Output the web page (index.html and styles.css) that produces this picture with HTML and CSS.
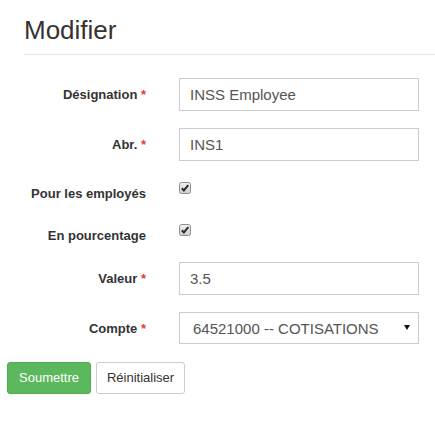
FILE: index.html
```html
<!DOCTYPE html>
<html lang="fr">
<head>
<meta charset="utf-8">
<title>Modifier</title>
<link rel="stylesheet" href="styles.css">
</head>
<body>
<div class="page">
  <div class="header">
    <h1 class="title">Modifier</h1>
  </div>
  <form class="form">
    <div class="row">
      <label class="lbl">Désignation <span class="req">*</span></label>
      <div class="ctl"><input class="inp" type="text" value="INSS Employee"></div>
    </div>
    <div class="row">
      <label class="lbl">Abr. <span class="req">*</span></label>
      <div class="ctl"><input class="inp" type="text" value="INS1"></div>
    </div>
    <div class="row row-check">
      <label class="lbl lbl-check">Pour les employés</label>
      <div class="ctl">
        <span class="check"><svg width="12" height="12" viewBox="0 0 12 12"><defs><linearGradient id="g1" x1="0" y1="0" x2="0" y2="1"><stop offset="0" stop-color="#f2f2f2"/><stop offset="1" stop-color="#cfcfcf"/></linearGradient></defs><rect x="0.5" y="0.5" width="11" height="11" rx="2" fill="url(#g1)" stroke="#8f8f8f"/><path d="M2.8 6.2 L4.9 8.4 L9.3 3.2" fill="none" stroke="#2b2b2b" stroke-width="2"/></svg></span>
      </div>
    </div>
    <div class="row row-check">
      <label class="lbl lbl-check">En pourcentage</label>
      <div class="ctl">
        <span class="check"><svg width="12" height="12" viewBox="0 0 12 12"><defs><linearGradient id="g2" x1="0" y1="0" x2="0" y2="1"><stop offset="0" stop-color="#f2f2f2"/><stop offset="1" stop-color="#cfcfcf"/></linearGradient></defs><rect x="0.5" y="0.5" width="11" height="11" rx="2" fill="url(#g2)" stroke="#8f8f8f"/><path d="M2.8 6.2 L4.9 8.4 L9.3 3.2" fill="none" stroke="#2b2b2b" stroke-width="2"/></svg></span>
      </div>
    </div>
    <div class="row">
      <label class="lbl">Valeur <span class="req">*</span></label>
      <div class="ctl"><input class="inp" type="text" value="3.5"></div>
    </div>
    <div class="row">
      <label class="lbl">Compte <span class="req">*</span></label>
      <div class="ctl">
        <div class="sel-wrap">
          <select class="sel"><option>64521000 -- COTISATIONS</option></select>
        </div>
      </div>
    </div>
    <div class="actions">
      <button type="button" class="btn btn-success">Soumettre</button>
      <button type="button" class="btn btn-default">Réinitialiser</button>
    </div>
  </form>
</div>
</body>
</html>
```

FILE: styles.css
```css
* { box-sizing: border-box; }
body {
  margin: 0;
  font-family: "Liberation Sans", Arial, sans-serif;
  color: #333;
  background: #fff;
}
.page {
  padding-left: 7px;
}
.header {
  margin-left: 17px;
  padding-top: 15px;
  padding-bottom: 9px;
  border-bottom: 1px solid #e5e5e5;
}
.title {
  margin: 0;
  font-size: 26px;
  font-weight: normal;
  line-height: 30px;
  color: #333;
}
.form {
  padding-top: 23px;
}
.row {
  display: flex;
  align-items: flex-start;
  margin-bottom: 17px;
}
.lbl {
  width: 139px;
  flex: none;
  text-align: right;
  font-size: 13px;
  font-weight: bold;
  line-height: 33px;
  color: #333;
}
.lbl-check {
  padding-top: 6px;
  line-height: 19px;
}
.req {
  color: #e8383d;
  font-weight: bold;
}
.ctl {
  margin-left: 33px;
  width: 240px;
}
.inp {
  display: block;
  width: 240px;
  height: 33px;
  margin: 0;
  padding: 0 10px;
  border: 1px solid #ccc;
  border-radius: 0;
  font-family: "Liberation Sans", Arial, sans-serif;
  font-size: 15px;
  color: #555;
  background: #fff;
  outline: none;
}
.row-check .ctl {
  height: 25px;
}
.check {
  display: block;
  width: 12px;
  height: 12px;
  margin-top: 4px;
}
.check svg { display: block; }
.sel-wrap {
  position: relative;
  width: 240px;
}
.sel-wrap::after {
  content: "";
  position: absolute;
  right: 9px;
  top: 13px;
  border-left: 3px solid transparent;
  border-right: 3px solid transparent;
  border-top: 5px solid #111;
  pointer-events: none;
}
.sel {
  display: block;
  width: 240px;
  height: 32px;
  margin: 0;
  padding: 0 12px 0 13px;
  border: 1px solid #ccc;
  border-radius: 0;
  background: #fff;
  font-family: "Liberation Sans", Arial, sans-serif;
  font-size: 15px;
  color: #555;
  -webkit-appearance: none;
  appearance: none;
  outline: none;
}
.actions {
  display: flex;
  gap: 5px;
}
.btn {
  height: 32px;
  padding: 0 11px;
  border-radius: 3px;
  font-family: "Liberation Sans", Arial, sans-serif;
  font-size: 13px;
  line-height: 30px;
  cursor: pointer;
}
.btn-success {
  background: #5cb85c;
  border: 1px solid #4cae4c;
  color: #fff;
}
.btn-default {
  padding: 0 10px;
  background: #fff;
  border: 1px solid #ccc;
  color: #333;
}
```
